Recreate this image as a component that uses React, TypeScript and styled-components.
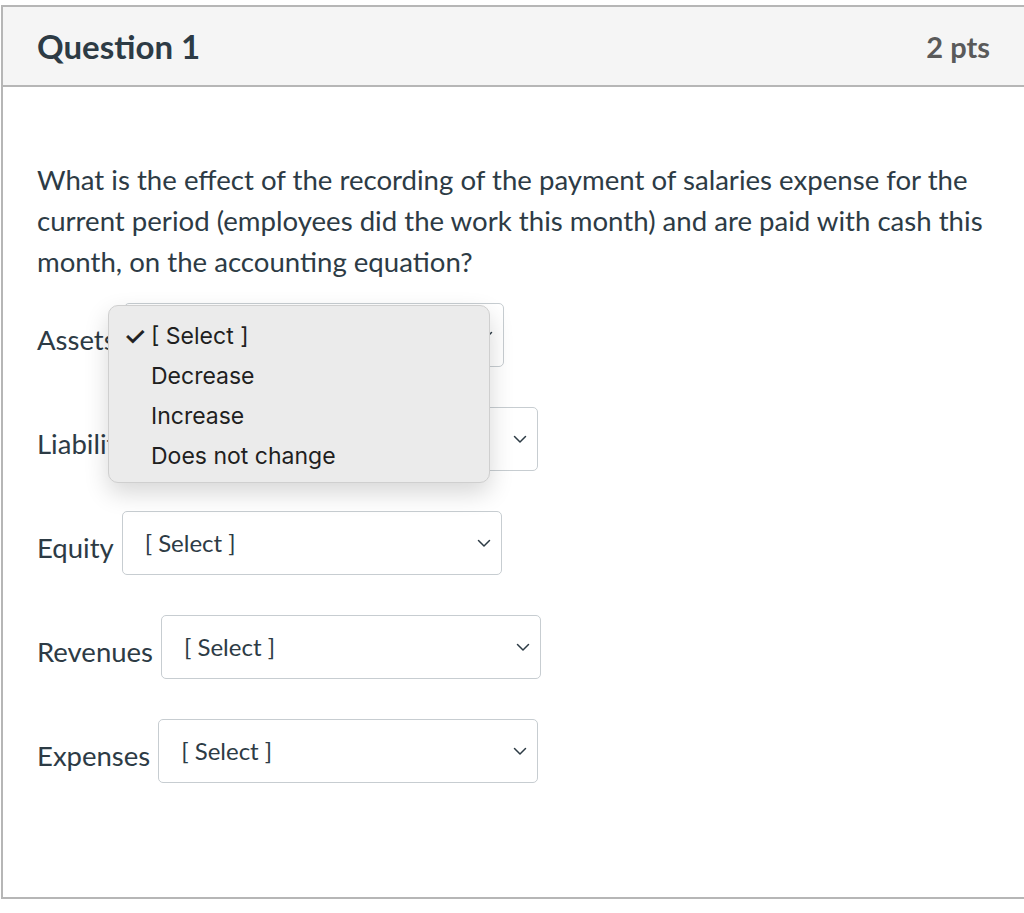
import { FC } from 'react'
import styled, { createGlobalStyle } from 'styled-components'

const GlobalStyle = createGlobalStyle`
  html, body {
    margin: 0;
    padding: 0;
    background: #ffffff;
    overflow: hidden;
  }
  body {
    font-family: Lato, 'Open Sans', sans-serif;
    color: #2d3b45;
  }
`

const rows = ['Assets', 'Liabilities', 'Equity', 'Revenues', 'Expenses']
const options = ['[ Select ]', 'Decrease', 'Increase', 'Does not change']

const Chevron: FC = () => (
  <svg width="14" height="9" viewBox="0 0 14 9" fill="none">
    <path
      d="M1.5 1.5 L7 7 L12.5 1.5"
      stroke="#2d3b45"
      strokeWidth="1.5"
      strokeLinecap="round"
      strokeLinejoin="round"
    />
  </svg>
)

const App: FC = () => {
  return (
    <>
      <GlobalStyle />
      <Card>
        <Header>
          <Title>Question 1</Title>
          <Points>2 pts</Points>
        </Header>
        <Body>
          <QuestionText>
            What is the effect of the recording of the payment of salaries
            expense for the current period (employees did the work this month)
            and are paid with cash this month, on the accounting equation?
          </QuestionText>
          <Answers>
            {rows.map((label, i) => (
              <Row key={label}>
                <Label>{label}</Label>
                <SelectBox>
                  <SelectText>[ Select ]</SelectText>
                  <Chevron />
                </SelectBox>
                {i === 0 && (
                  <Menu>
                    {options.map((opt, j) => (
                      <MenuItem key={opt}>
                        <Check>{j === 0 ? '✓' : ''}</Check>
                        {opt}
                      </MenuItem>
                    ))}
                  </Menu>
                )}
              </Row>
            ))}
          </Answers>
        </Body>
      </Card>
    </>
  )
}

export default App

const Card = styled.div`
  margin: 5px 0 0 1px;
  border: 2px solid #b6b6b6;
  border-right: none;
  display: flex;
  flex-direction: column;
`

const Header = styled.div`
  display: flex;
  align-items: center;
  justify-content: space-between;
  height: 78px;
  padding: 0 34px 0 34px;
  background: #f5f5f5;
  border-bottom: 2px solid #b6b6b6;
`

const Title = styled.h2`
  margin: 0;
  font-size: 33px;
  font-weight: 700;
  color: #2d3b45;
`

const Points = styled.span`
  font-size: 29px;
  font-weight: 700;
  color: #5a5a5a;
`

const Body = styled.div`
  display: flex;
  flex-direction: column;
  padding: 72px 24px 114px 34px;
`

const QuestionText = styled.p`
  margin: 0 0 21px 0;
  font-size: 27.6px;
  line-height: 41px;
  color: #2d3b45;
`

const Answers = styled.div`
  display: flex;
  flex-direction: column;
  gap: 40px;
`

const Row = styled.div`
  position: relative;
  display: flex;
  align-items: center;
  gap: 8px;
`

const Label = styled.span`
  font-size: 27.5px;
  margin-top: 9px;
  color: #2d3b45;
`

const SelectBox = styled.div`
  box-sizing: border-box;
  width: 380px;
  height: 64px;
  display: flex;
  align-items: center;
  justify-content: space-between;
  padding: 0 10px 0 22px;
  border: 1px solid #c7cdd1;
  border-radius: 5px;
  background: #ffffff;
`

const SelectText = styled.span`
  font-size: 24px;
  color: #2d3b45;
  margin-top: -2px;
`

const Menu = styled.div`
  position: absolute;
  left: 71px;
  top: 2px;
  box-sizing: border-box;
  width: 382px;
  height: 178px;
  padding: 10px 0 0 0;
  background: #ebebeb;
  border: 1px solid #cfcfcf;
  border-radius: 10px;
  box-shadow: 0 10px 24px rgba(0, 0, 0, 0.16);
  display: flex;
  flex-direction: column;
  font-family: Inter, 'Liberation Sans', sans-serif;
  z-index: 2;
`

const MenuItem = styled.div`
  display: flex;
  align-items: center;
  height: 40px;
  font-size: 23px;
  color: #1f1f1f;
`

const Check = styled.span`
  width: 42px;
  padding-left: 15px;
  box-sizing: border-box;
  font-size: 25px;
  font-weight: 400;
  -webkit-text-stroke: 0.8px #1f1f1f;
`
